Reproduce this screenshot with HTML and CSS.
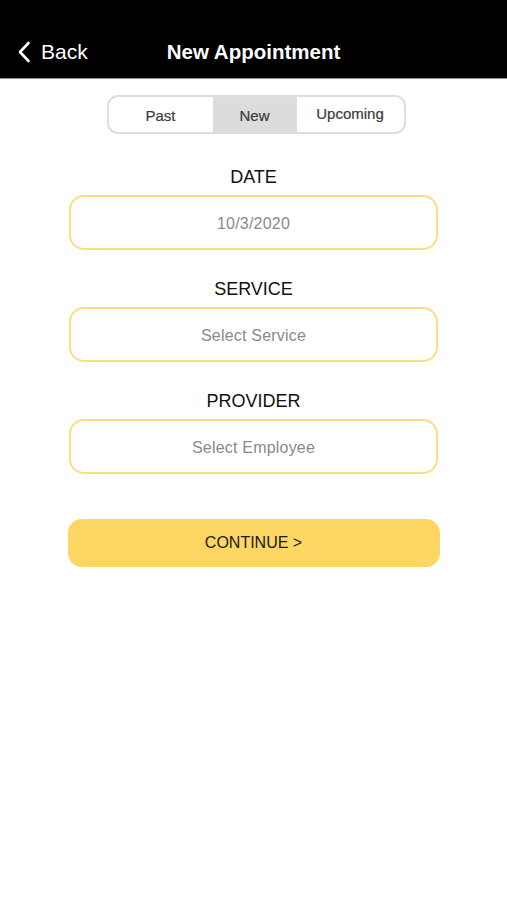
FILE: index.html
```html
<!DOCTYPE html>
<html>
<head>
<meta charset="utf-8">
<link rel="stylesheet" href="styles.css">
</head>
<body>
<header class="nav">
  <div class="back">
    <svg class="chev" width="14" height="22" viewBox="0 0 14 22"><path d="M11.5 2 L3 11 L11.5 20" fill="none" stroke="#fff" stroke-width="2.6" stroke-linecap="round" stroke-linejoin="round"/></svg>
    <span>Back</span>
  </div>
  <div class="title">New Appointment</div>
</header>
<main class="content">
  <div class="seg">
    <div class="seg-item past">Past</div>
    <div class="seg-item new active">New</div>
    <div class="seg-item upcoming">Upcoming</div>
  </div>
  <div class="field first">
    <div class="label">DATE</div>
    <div class="input">10/3/2020</div>
  </div>
  <div class="field">
    <div class="label">SERVICE</div>
    <div class="input">Select Service</div>
  </div>
  <div class="field">
    <div class="label">PROVIDER</div>
    <div class="input">Select Employee</div>
  </div>
  <div class="btn">CONTINUE &gt;</div>
</main>
</body>
</html>
```
FILE: styles.css
```css
html, body {
  margin: 0;
  padding: 0;
  background: #fff;
  font-family: "Liberation Sans", Arial, sans-serif;
}
.nav {
  height: 79px;
  background: #000;
  border-bottom: 1px solid #8a8a8a;
  position: relative;
  box-sizing: border-box;
  display: flex;
  align-items: flex-end;
}
.back {
  display: flex;
  align-items: center;
  gap: 10px;
  padding-left: 17px;
  padding-bottom: 14px;
  color: #fff;
  font-size: 21px;
}
.title {
  position: absolute;
  left: 0;
  right: 0;
  bottom: 14px;
  text-align: center;
  color: #fff;
  font-weight: bold;
  font-size: 20.5px;
}
.content {
  display: flex;
  flex-direction: column;
  align-items: center;
}
.seg {
  margin-top: 16px;
  margin-left: 5px;
  width: 299px;
  height: 39px;
  box-sizing: border-box;
  border: 2px solid #dedede;
  border-radius: 11px;
  display: flex;
  overflow: hidden;
}
.seg-item {
  display: flex;
  align-items: center;
  justify-content: center;
  font-size: 15px;
  color: #3a3a3a;
  padding-top: 1px;
  -webkit-text-stroke: 0.2px #3a3a3a;
}
.past { width: 104px; }
.new { width: 84px; }
.upcoming { flex: 1; padding-top: 0; padding-bottom: 2px; }
.active { background: #dcdcdc; }
.field {
  display: flex;
  flex-direction: column;
  align-items: center;
  margin-top: 28px;
}
.field.first { margin-top: 32px; }
.label {
  font-size: 18px;
  line-height: 22px;
  color: #111;
  margin-bottom: 7px;
}
.input {
  width: 369px;
  height: 55px;
  box-sizing: border-box;
  border: 2px solid #f9dd80;
  border-radius: 15px;
  display: flex;
  align-items: center;
  justify-content: center;
  padding-top: 2px;
  font-size: 16px;
  letter-spacing: 0.2px;
  color: #8a8a8a;
}
.btn {
  margin-top: 45px;
  width: 372px;
  height: 48px;
  background: #fdd663;
  border-radius: 14px;
  display: flex;
  align-items: center;
  justify-content: center;
  font-size: 16px;
  color: #1a1a1a;
}
```
